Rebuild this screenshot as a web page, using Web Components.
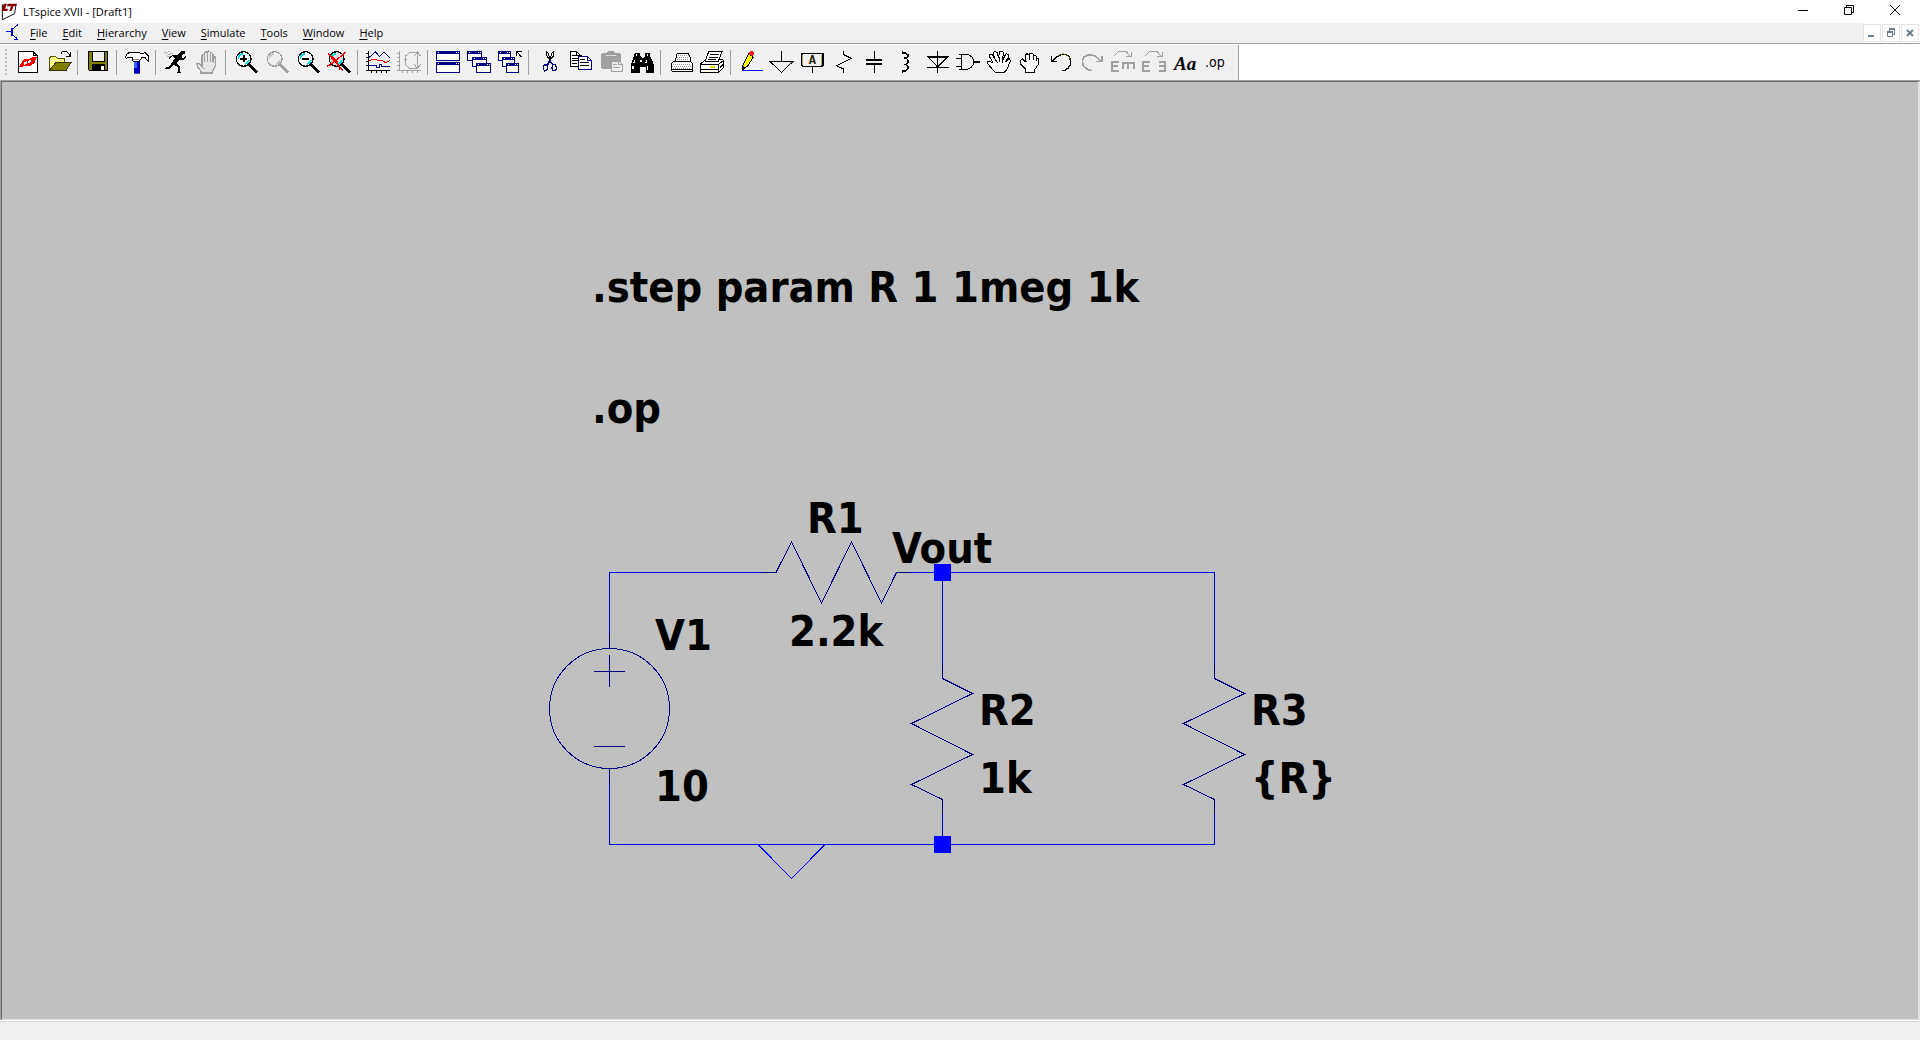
<!DOCTYPE html>
<html lang="en">
<head>
<meta charset="utf-8">
<title>LTspice XVII - [Draft1]</title>
<style>
html, body { margin: 0; height: 100%; }
body { font: 11px/16px "Open Sans", "Noto Sans", sans-serif; color: #000; background: #f0f0f0; }
</style>
</head>
<body>
<lt-app></lt-app>
<script>
const define = (name, html, init) => {
  const template = document.createElement('template');
  template.innerHTML = html;
  customElements.define(name, class extends HTMLElement {
    constructor() {
      super();
      this.attachShadow({ mode: 'open' }).append(template.content.cloneNode(true));
    }
    connectedCallback() { if (init) init(this, this.shadowRoot); }
  });
};

const BTN = 'button{display:flex;align-items:center;justify-content:center;border:0;margin:0;padding:0;background:none;font:inherit;color:inherit}';

/* Title bar */
define('lt-titlebar', `<style>
:host{display:flex;height:23px;background:#fff;align-items:flex-start;justify-content:space-between}
.name{display:flex;gap:6px;align-items:center;font-size:11px;line-height:23px}
.name svg{margin-left:1px}
.win{display:flex;padding-right:2px}
${BTN} button{width:46px;height:20px}
svg{display:block}
</style>
<div class="name"><svg width="16" height="18" viewBox="0 0 48 54"><path d="M3 4H45L41 33L5 50Z" fill="#fff"/><path d="M4 4V50L41 32L45 4" fill="none" stroke="#111" stroke-width="3"/><path d="M8 2H18L12 17H21L19 24H2ZM20 2H48L45 10H37L32 24H25L30 10H18Z" fill="#800000"/></svg><span>LTspice XVII - [Draft1]</span></div>
<div class="win">
<button aria-label="Minimize"><svg width="12" height="12"><path d="M1 6.5H11" stroke="#000"/></svg></button>
<button aria-label="Restore"><svg width="12" height="12" fill="none" stroke="#000"><path d="M1.500 3.500H8.500V10.500H1.500ZM3.500 3.500V1.500H10.500V8.500H8.500"/></svg></button>
<button aria-label="Close"><svg width="12" height="12" stroke="#000"><path d="M1 1L11 11M11 1L1 11"/></svg></button>
</div>`);

/* Menu entry: first letter is the access key */
define('lt-menu', `<style>:host{display:block}${BTN} button{height:20px} u{text-underline-offset:2px}</style>
<button><span><u></u><b style="font-weight:inherit"></b></span></button>`, (el, root) => {
  const label = el.getAttribute('label');
  root.querySelector('u').textContent = label[0];
  root.querySelector('b').textContent = label.slice(1);
});

define('lt-menubar', `<style>
:host{display:flex;height:20px;background:#f0f0f0;border-bottom:1px solid #a0a0a0;align-items:stretch}
.icon{width:30px}
nav{display:flex;gap:15px;flex:1}
.mdi{display:flex;gap:1px;background:#fff;align-items:center;padding-right:1px}
${BTN} .mdi button{width:18px;height:18px;box-sizing:border-box;border:1px solid #e3e3e3;background:#fff}
svg{display:block}
</style>
<svg class="icon" width="30" height="20" viewBox="0 69 90 60" fill="none" stroke="#0000e0" stroke-width="3" shape-rendering="crispEdges"><path d="M18 94.500H34M34.500 84V107M37.500 84V107M38 88L47 79L55 73M38 103L46 112L55 121"/><path d="M43 118H49V112H52V121H43Z" fill="#0000e0" stroke="none"/></svg>
<nav><lt-menu label="File"></lt-menu><lt-menu label="Edit"></lt-menu><lt-menu label="Hierarchy"></lt-menu><lt-menu label="View"></lt-menu><lt-menu label="Simulate"></lt-menu><lt-menu label="Tools"></lt-menu><lt-menu label="Window"></lt-menu><lt-menu label="Help"></lt-menu></nav>
<div class="mdi">
<button aria-label="Minimize document"><svg width="10" height="10"><path d="M1 8H7" stroke="#6e8090" stroke-width="2"/></svg></button>
<button aria-label="Restore document"><svg width="10" height="10" fill="none" stroke="#6e8090"><path d="M1.500 4.500H6.500V8.500H1.500ZM3.500 3V1.500H8.500V6.500H7"/><path d="M1 4H7M3 1H9" stroke-width="2"/></svg></button>
<button aria-label="Close document"><svg width="10" height="10" stroke="#6e8090" stroke-width="2"><path d="M2 2L8 8M8 2L2 8"/></svg></button>
</div>`);

/* Toolbar glyphs: [label, viewBox x origin, markup]; 3 units to the pixel */
const k = 'fill="none" stroke="#000" stroke-width="3"';
const g = 'fill="none" stroke="#a0a0a0" stroke-width="3"';
const n = 'fill="none" stroke="#000080" stroke-width="3"';
const frame = (x, y, w, h) => `<path d="M${x} ${y}h${w}v${h}h${-w}z" fill="#fff" stroke="#000080" stroke-width="3"/><path d="M${x} ${y + 3}h${w}" stroke="#000080" stroke-width="9"/><path d="M${x + 3} ${y + 3}h3M${x + w - 12} ${y + 3}h3M${x + w - 6} ${y + 3}h3" stroke="#fff" stroke-width="3"/>`;
const lens = (x, c, hi, fill) => `<path d="M${x + 35} 61l8 0l23 20l-6 6l-24 -21z" fill="${c}"/><circle cx="${x + 23}" cy="45" r="22" fill="${fill}" stroke="${c}" stroke-width="4"/><path d="M${x + 7} 44q1 -13 14 -15M${x + 27} 60q11 -3 12 -13" fill="none" stroke="${hi}" stroke-width="5"/>`;
const icons = [
['New schematic', 39, `<path d="M55.500 23.500H100.500L112.500 35.500V85.500H55.500Z" fill="#fff" stroke="#000" stroke-width="3"/><path d="M100.500 23V35.500H113" ${k}/><path d="M57 69L66 54L73 46H84L100 38H111L103 57L91 66H82Z" fill="#f00"/><path d="M72 60L81 54M84 56L93 49" stroke="#fff" stroke-width="6"/>`],
['Open', 132, `<path d="M148.500 78V42L153 37H166L171 42H193.500V54H169L150 78" fill="#ffff70" stroke="#555500" stroke-width="3"/><path d="M151 43H163M154 49H185M151 55H169M151 61H160" stroke="#fff" stroke-width="3" stroke-dasharray="3 3"/><path d="M148 79.500L168 55.500H213L198 79.500Z" fill="#808000" stroke="#333300" stroke-width="3"/><path d="M183 31V27L189 22H199L210 34M212 25V36H199" ${k}/>`],
'|',
['Save', 249, `<path d="M265.500 22.500H322.500V79.500H268.500L265.500 76.500Z" fill="#808000" stroke="#000" stroke-width="3"/><path d="M276.500 23.500H312.500V52.500H276.500Z" fill="#eee" stroke="#000" stroke-width="3"/><path d="M276 61H315V81H276Z" fill="#000"/><path d="M303 67H311V79H303Z" fill="#fff"/>`],
'|',
['Control panel', 366, `<path d="M403 49H419V87H403Z" fill="#0000d0" stroke="#000080" stroke-width="2"/><path d="M403 49H411V72H403Z" fill="#4060ff"/><path d="M376 40L382 29L391 24H414L424 29H429L435 25L445 36V52L435 41H426L417 51H399L397 41H385L379 43Z" fill="#fff" stroke="#000" stroke-width="3"/><path d="M400 46H417" stroke="#888" stroke-width="3"/>`],
'|',
['Run', 483, `<path d="M543 21H554V31H548L544 42H550L558 36V42L551 48H540L530 57L539 67V82L543 86H532L534 80V70L520 62L512 73L494 76V72L508 68L517 54L524 43L517 37L508 44V49L505 41L517 33H533Z" fill="#000"/><path d="M493 25H499L504 30H512L518 27M497 33L503 38L511 36M505 22L514 27" fill="none" stroke="#999" stroke-width="2"/>`],
['Halt', 576, `<path d="M603 82L592 67L591 60L597 59L606 67V34L610 31L614 35V54V26L618 23L622 26V52V23L627 21L631 25V53V28L635 26L639 30V55L643 39L646 38V65L638 82V87H603Z" fill="#e8e8e8" stroke="#a0a0a0" stroke-width="4"/><path d="M614 29V55M622 25V54M631 26V54M639 32V57M606 70L614 75" ${g}/>`],
'|',
['Zoom in', 33, lens(48, '#000', '#00dddd', '#fff') + '<path d="M61 44H82M71.500 34V55" stroke="#000" stroke-width="5"/>'],
['Pan', 126, lens(141, '#a0a0a0', '#c4c4c4', '#f0f0f0')],
['Zoom back', 219, lens(234, '#000', '#00dddd', '#fff') + '<path d="M247 44H268" stroke="#000" stroke-width="5"/>'],
['Zoom full extents', 312, lens(327, '#000', '#00dddd', '#ddd') + '<path d="M324 28L368 80M322 67L347 50L378 24M323 31L337 38L351 53L360 76M326 64L334 65" fill="none" stroke="#f00" stroke-width="4"/>'],
'|',
['Autorange', 429, `<path d="M445.500 21V80M439 28.500H445M439 40.500H445M439 52.500H445M439 64.500H445M439 79.500H511M454.500 80V87M469.500 80V87M484.500 80V87M499.500 80V87" ${k}/><path d="M448 40L466 23L479 38L492 24L510 41M448 63.500H469V69.500H478V60.500H485V66.500H510" ${n}/><path d="M448 50L462 45L475 49H487L496 56L510 50" fill="none" stroke="#f00" stroke-width="3"/>`],
['Polar plot', 522, `<path d="M538.500 21V80M532 28.500H538M532 40.500H538M532 52.500H538M532 64.500H538M532 79.500H604M547.500 80V87M562.500 80V87M577.500 80V87M592.500 80V87M593.500 25V75M552 46.500H560M570 24.500H592M570 74.500H592M569 25L555 38V60L569 74M583 37L592 23L602 37M583 61L592 74L602 61" ${g}/>`],
'|',
['Tile', 39, frame(49.5, 23.500, 69, 27) + frame(49.5, 55.500, 69, 30)],
['Cascade', 132, frame(142.500, 22.500, 42, 28) + frame(157.500, 40.500, 42, 27) + frame(169.500, 58.500, 42, 27)],
['Close all', 225, frame(235.500, 22.500, 36, 27) + frame(247.500, 40.500, 36, 27) + frame(259.500, 58.500, 36, 27) + `<path d="M290 36V22H305M291 24L305 40" ${k}/>`],
'|',
['Cut', 342, `<path d="M380 22V35L389 48L401 35V22M383 24L392 49M397 24L387 56" ${k}/><path d="M390 50L382 63M388 50L400 63" stroke="#000080" stroke-width="6"/><path d="M373 63H381L383 70L380 78L374 81L370 75V69ZM399 62H405L409 69V74L405 80H399L396 72Z" fill="none" stroke="#000080" stroke-width="4"/>`],
['Copy', 435, `<path d="M451.500 23.500H471L483.500 35.500V66.500H451.500Z" fill="#fff" stroke="#000" stroke-width="3"/><path d="M456 34.500H468M456 42.500H474M456 50.500H474M456 58.500H472M470.500 24V35.500H483" ${k}/><path d="M475.500 37.500H502L514.500 49.500V76.500H475.500Z" fill="#fff" stroke="#000080" stroke-width="3"/><path d="M501.500 38V50.500H514" ${n}/><path d="M481 47.500H495M481 56.500H508M481 65.500H508" ${k}/>`],
['Paste', 528, `<path d="M543 30L550 26H560L565 21H579L584 26H595L602 30V76H549L543 72Z" fill="#a0a0a0"/><path d="M557 33H587" stroke="#ddd" stroke-width="3"/><path d="M573.500 51.500H597L607.500 61.500V81.500H573.500Z" fill="#eee" stroke="#a0a0a0" stroke-width="3"/><path d="M596.500 52V62H607M579 62.500H590M579 71.500H601" ${g}/>`],
['Find', -9, `<path d="M15 27H31V35L36 42H41L46 35V27H60V36L70 56L73 81V87H47V69H30V87H3V60Z" fill="#000"/><path d="M20 31V36M52 31V36M15 48L11 57M9 65V76M51 50L48 57M52 66V77M33 49V55" stroke="#fff" stroke-width="4"/>`],
'|',
['Print setup', 108, `<path d="M123.500 58.500L133 51.500H181L188.500 58.500V80L184 83.500H128L123.500 78Z" fill="#fff" stroke="#000" stroke-width="3"/><path d="M135 51.500L142 27H174L181 40V51.500Z" fill="#fff" stroke="#000" stroke-width="3"/><path d="M143 35H177M142 41H177M141 47H177M129 61H184M127 67H184M129 73H181" stroke="#999" stroke-width="3" stroke-dasharray="3 3"/><path d="M127 77.500H185" ${k}/>`],
['Print', 201, `<path d="M211.500 60L226 47H279L281.500 51V70L266 85.500H211.500Z" fill="#fff" stroke="#000" stroke-width="3"/><path d="M211 61.500H265V85M265 61L280 50" ${k}/><path d="M225 53L236 23.500H276L264 53Z" fill="#fff" stroke="#000" stroke-width="3"/><path d="M241 32H266M238 40H263M235 47H259M270 70L279 61M212 77.500H265" ${k}/><path d="M239 68H255" stroke="#dddd00" stroke-width="5"/>`],
'|',
['Wire', 318, `<path d="M338.500 77V65L356 29L370 39L353 66Z" fill="#ff0" stroke="#000" stroke-width="3"/><path d="M355 30L360 22H370L373 27L369 38Z" fill="#f02020"/><path d="M337 65L347 69L338 81Z" fill="#000"/><path d="M337 79.500H399" stroke="#00f" stroke-width="3"/>`],
['Ground', 411, `<path d="M454.500 22V53M421.500 53.500H487.500L454.500 86Z" ${k}/>`],
['Label net', 504, `<path d="M547.500 68V87" ${k}/><path d="M517 28.500H578V64.500L574 67.500H518L514.500 63V31Z" fill="#f0f0f0" stroke="#000" stroke-width="5"/><path d="M518 32V64M574 32V63" stroke="#888800" stroke-width="2"/><text x="547" y="59" font-family="Liberation Mono" font-weight="700" font-size="36" text-anchor="middle" fill="#222200">A</text>`],
['Resistor', -3, `<path d="M41.500 21V32L64 43L19 65L41 75V87" ${k}/>`],
['Capacitor', 90, `<path d="M132.500 21V47M132.500 62V87" ${k}/><path d="M108 48H156M108 61H156" stroke="#000" stroke-width="6"/>`],
['Inductor', 183, `<path d="M218 21V27H226L234 32V38L228 42H221H228L234 48V57L228 61H221H228L234 67V75L227 81H218V87" fill="none" stroke="#000" stroke-width="4"/>`],
['Diode', 276, `<path d="M323 21V87M294 39H353L323 69Z" ${k}/><path d="M290 38.500H357M290 71.500H357" ${k}/>`],
['Component', 369, `<path d="M378 43.500H394M378 66.500H394M393.500 32V77M388 32.500H415L425 38L431 50V60L423 71L412 76.500H388" ${k}/><path d="M432 54H450" stroke="#000" stroke-width="5"/>`],
['Move', 462, `<path d="M494 84L473 59V53H482L490 58L478 37V30H486L495 46L489 27L494 22L501 25L506 43L508 24L514 21L520 25L518 48L528 29L536 31V38L527 54L537 44L542 50L530 77L523 85Z" fill="#fff" stroke="#000" stroke-width="3"/><path d="M495 45L503 57M508 40L510 55M520 45L516 58" ${k}/>`],
['Drag', 555, `<path d="M586 84V75L571 59V49L577 45L585 52V34L591 29L598 33V29H609L611 34L619 36V43L626 45V60L613 78V84Z" fill="#fff" stroke="#000" stroke-width="3"/><path d="M585 48L589 53M598 32V47M611 35V48M619 42V50" ${k}/>`],
['Undo', 18, `<path d="M34 37V52H50M36 51L52 38L65 31H76L88 38L92 51V61L84 73L74 79H66" fill="none" stroke="#000" stroke-width="4"/><path d="M55 34L70 29L85 36L91 48" fill="none" stroke="#888800" stroke-width="2"/>`],
['Redo', 111, `<path d="M185 37V52H169M182 51L167 37L154 32H144L131 40L127 52L130 65L142 76L157 80" fill="none" stroke="#a0a0a0" stroke-width="5"/>`],
['Mirror', 204, `<path d="M236 54H217V82H236M217 67H235" fill="none" stroke="#a0a0a0" stroke-width="6"/><path d="M246 57H285M249 57V76M265 57V76M282 57V76" fill="none" stroke="#a0a0a0" stroke-width="6"/><path d="M223 36L236 22.500H258L270 36M274 25V38.500H258" ${g}/>`],
['Rotate', 297, `<path d="M329 54H310V82H329M310 67H328M357 54H375V82H357M358 67H375" fill="none" stroke="#a0a0a0" stroke-width="6"/><path d="M316 36L329 22.500H351L363 36M367 25V38.500H351" ${g}/>`],
['Text', 390, `<text x="402" y="79" font-family="Liberation Serif" font-weight="700" font-style="italic" font-size="57">Aa</text>`],
['SPICE directive', 483, `<text x="495" y="70" font-family="DejaVu Sans Condensed" font-size="42">.op</text>`]
];

define('lt-toolbar', `<style>
:host{display:flex;height:36px;background:#fff;border-bottom:1px solid #a0a0a0}
.bar{display:flex;align-items:center;background:#f0f0f0;margin-top:1px;border-right:1px solid #a0a0a0;padding-right:6px}
.grip{width:3px;height:27px;margin:0 5px;background:repeating-linear-gradient(#c0c0c0 0 2px,transparent 2px 4px) 0 0/2px 100% no-repeat}
i{width:5px;height:25px;margin-left:2px;border-left:1px solid #a0a0a0}
${BTN} button{width:31px;height:24px;margin-bottom:1px} svg{display:block}
</style><div class="bar" role="toolbar"><span class="grip"></span></div>`, (el, root) => {
  root.querySelector('.bar').insertAdjacentHTML('beforeend', icons.map(i => i === '|' ? '<i></i>' :
    `<button aria-label="${i[0]}"><svg width="31" height="24" viewBox="${i[1]} 18 93 72" shape-rendering="crispEdges">${i[2]}</svg></button>`).join(''));
});

/* Schematic sheet */
const resistor = x => `<g transform="translate(${x} 0)"><path class="w" d="M0 572V664M0 814V844"/><path class="s" d="M0 664V678.500L30 693.500L-31 723.500L30 754.500L-31 784.500L0 799.500V814"/></g>`;
define('lt-schematic', `<style>
:host{display:block;box-sizing:border-box;background:#c0c0c0;border:1px solid #696969;border-right:2px solid #e3e3e3;border-bottom:1px solid #e3e3e3;min-height:0}
svg{display:block;width:100%;height:100%}
.w{fill:none;stroke:#00f} .s{fill:none;stroke:#000080}
text{font:700 43px "DejaVu Sans Condensed","DejaVu Sans",sans-serif}
</style>
<svg viewBox="2 82 1916 937" shape-rendering="crispEdges">
<path class="w" d="M761 572.500H609.500V633M609.500 784V844.500H1214.500M911 572.500H1214.500M758 844.500L791.500 878.500L825 844.500"/>
<path class="s" d="M609.500 633V648M609.500 768V784M761 572.500H776L791.500 542L821.500 603L851.500 542L881.500 603L896.500 572.500H911M594 671.500H625M609.500 655V687M594 746.500H625"/>
<circle class="s" cx="609.500" cy="708.500" r="60"/>
${resistor(942.5)}${resistor(1214.5)}
<text x="592" y="302">.step param R 1 1meg 1k</text>
<text x="592" y="423">.op</text>
<text x="807" y="533">R1</text><text x="789" y="646">2.2k</text>
<text x="892" y="563">Vout</text>
<text x="655" y="650">V1</text><text x="655" y="801">10</text>
<text x="979" y="725">R2</text><text x="979" y="793">1k</text>
<text x="1251" y="725">R3</text><text x="1251" y="793">{R}</text>
<path fill="#00f" d="M934 564h17v17h-17zM934 836h17v17h-17z"/>
</svg>`);

define('lt-statusbar', `<style>:host{display:block;height:18px;background:#f0f0f0;border-top:1px solid #d7d7d7;box-shadow:0 -1px #fff}</style>`);

define('lt-app', `<style>
:host{display:flex;flex-direction:column;height:100vh}
.sheet{flex:1;min-height:0;display:flex;border-left:1px solid #a0a0a0;margin-bottom:1px}
lt-schematic{flex:1}
lt-titlebar,lt-menubar,lt-toolbar,lt-statusbar{flex:none}
</style>
<lt-titlebar></lt-titlebar><lt-menubar></lt-menubar><lt-toolbar></lt-toolbar>
<div class="sheet"><lt-schematic></lt-schematic></div>
<lt-statusbar></lt-statusbar>`);
</script>
</body>
</html>
